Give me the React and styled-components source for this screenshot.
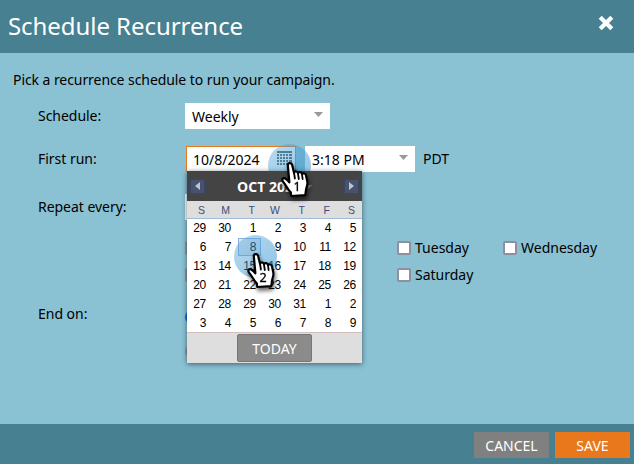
import React from "react";
import styled, { createGlobalStyle, css } from "styled-components";

const GlobalStyle = createGlobalStyle`
  *, *::before, *::after { box-sizing: border-box; }
  body { margin: 0; overflow: hidden; }
  button, input { font-family: inherit; }
`;

const Dialog = styled.div`
  display: flex;
  flex-direction: column;
  width: 634px;
  height: 464px;
  background: #8ac1d3;
  color: #000;
  font: 14px/20px "Noto Sans", sans-serif;
`;

const Header = styled.header`
  display: flex;
  flex: none;
  align-items: center;
  justify-content: space-between;
  height: 53px;
  padding: 0 20px 0 8px;
  background: #468091;
  color: #fff;
`;

const Title = styled.h1`
  margin: -1px 0 0;
  font-size: 24px;
  line-height: 32px;
  font-weight: 400;
  letter-spacing: -0.06px;
`;

const CloseButton = styled.button`
  display: flex;
  width: 16px;
  height: 16px;
  margin-bottom: 7px;
  padding: 0;
  border: 0;
  background: none;
`;

const Body = styled.main`
  flex: 1;
  padding: 17px 0 0 13px;
`;

const Intro = styled.p`
  margin: 0 0 13px;
  letter-spacing: -0.07px;
`;

const FormRow = styled.div`
  display: flex;
  height: ${(p) => p.$height}px;
  padding-left: 25px;
`;

const Label = styled.div`
  flex: none;
  width: 147px;
  padding-top: 3px;
  letter-spacing: -0.03px;
`;

const Control = styled.div`
  position: relative;
  display: flex;
  align-items: center;
  justify-content: space-between;
  flex: none;
  width: ${(p) => p.$width}px;
  height: 26px;
  padding: 1px 7px 0;
  background: #fff;
`;

const DateControl = styled(Control)`
  margin: 0 9px 0 1px;
  padding: 1px 2px 0 6px;
  border: 1px solid #e87a1c;
`;

const Arrow = styled.span`
  width: 9px;
  height: 5px;
  margin-bottom: 4px;
  background: #999;
  clip-path: polygon(0 0, 100% 0, 50% 100%);
`;

const Zone = styled.span`
  padding: 3px 0 0 8px;
`;

const CheckGrid = styled.div`
  display: grid;
  grid-template-columns: repeat(4, 106px);
  grid-auto-rows: 27px;
  margin-left: 172px;
  height: 63px;
`;

const Option = styled.label`
  display: flex;
  align-items: center;
  gap: 4px;
  height: 20px;
`;

const Box = styled.span`
  width: 14px;
  height: 14px;
  border: 2px solid #8f8f9d;
  border-radius: ${(p) => (p.$round ? "50%" : "2px")};
  background: #fff;
  ${(p) => p.$on && css`border-color: #0060df;`}
`;

const Radios = styled.div`
  display: flex;
  flex-direction: column;
  gap: 14px;
  padding-top: 6px;
`;

const Footer = styled.footer`
  display: flex;
  flex: none;
  justify-content: flex-end;
  gap: 6px;
  height: 40px;
  padding: 8px 4px 0 0;
  background: #468091;
`;

const Button = styled.button`
  width: 75px;
  height: 26px;
  padding: 2px 0 0;
  border: 0;
  background: ${(p) => (p.$primary ? "#e8781b" : "#808080")};
  color: #fff;
  font-size: 14px;
  line-height: 24px;
`;

const Calendar = styled.div`
  position: absolute;
  z-index: 2;
  top: 24px;
  left: 0;
  width: 175px;
  height: 192px;
  background: #fff;
  box-shadow: 0 1px 5px rgba(30, 50, 60, 0.7);
  font-family: "Liberation Sans", Arial, sans-serif;
`;

const MonthBar = styled.div`
  display: flex;
  align-items: center;
  justify-content: space-between;
  height: 30px;
  padding: 0 3px;
  background: #444;
  color: #fff;
  font: 700 14px/20px "Open Sans", "Noto Sans", sans-serif;
`;

const MonthButton = styled.button`
  display: flex;
  align-items: center;
  justify-content: center;
  width: 15px;
  height: 15px;
  padding: 0;
  border: 1px solid #384766;
  border-radius: 1px;
  background: #465270;
`;

const MonthName = styled.span`
  display: flex;
  align-items: center;
  gap: 4px;
  padding: 1px 0 0;
`;

const Weekdays = styled.div`
  display: grid;
  grid-template-columns: repeat(7, 25px);
  height: 18px;
  padding-top: 1px;
  border-bottom: 1px solid #a3bad9;
  background: #dedede;
  color: #3a4f7c;
  font-size: 10.5px;
  line-height: 17px;
  text-align: right;
  span { padding-right: 7px; }
`;

const Days = styled.div`
  display: grid;
  grid-template-columns: repeat(7, 25px);
  grid-auto-rows: 19px;
  height: 113px;
`;

const Day = styled.span`
  margin: 0 1px;
  padding-right: 5px;
  font-size: 12px;
  letter-spacing: -0.3px;
  line-height: 19px;
  text-align: right;
  ${(p) => p.$selected && css`
    height: 18px;
    border: 1px solid #8db2e3;
    padding-right: 4px;
    line-height: 17px;
    background: #dfe8f6;
  `}
`;

const CalendarFooter = styled.div`
  display: flex;
  justify-content: center;
  height: 31px;
  padding-top: 1px;
  border-top: 1px solid #d1bfc1;
  background: #dedede;
`;

const TodayButton = styled.button`
  width: 75px;
  height: 28px;
  padding: 1px 0 0;
  border: 1px solid #777;
  border-radius: 2px;
  background: #8b8b8b;
  color: #fff;
  font: 14px/24px "Noto Sans", sans-serif;
`;

const Halo = styled.span`
  position: absolute;
  z-index: ${(p) => p.$z};
  left: ${(p) => p.$x}px;
  top: ${(p) => p.$y}px;
  width: 43px;
  height: 43px;
  border-radius: 50%;
  background: linear-gradient(135deg, rgba(80, 165, 215, 0.4), rgba(50, 145, 205, 0.55));
`;

const Pointer = styled.svg`
  position: absolute;
  z-index: 4;
  left: ${(p) => p.$x}px;
  top: ${(p) => p.$y}px;
  overflow: visible;
  filter: drop-shadow(1px 3px 2px rgba(0, 0, 0, 0.6));
`;

function Hand({ x, y, step }) {
  return (
    <Pointer $x={x} $y={y} width="28" height="35" viewBox="0 0 28 35">
      <path
        d="M6.8 3.1C6.6.7 10.4.3 11.1 2.7L13 10.8C13.5 8.8 16.4 9 16.9 11C17.9 9.4 20.7 10 21 12C22.4 10.8 24.7 11.6 25 13.4L26.4 20C26.8 24 24.6 26.3 24.8 29.6L24.2 33.2L10.2 34L9.8 30.4C6.9 27.8 5.4 23.6 2.7 20.5C.2 17.7 1.5 15.4 4.1 16.4C5.9 17.1 7 19.1 8.4 20.3Z"
        fill="#fff" stroke="#000" strokeWidth="2.2" strokeLinejoin="round"
      />
      <path d="M13 10.5l.9 6M16.9 11l.9 6M21 12l.6 5" fill="none" stroke="#000" strokeWidth="1.8" strokeLinecap="round" />
      <text x="16" y="29" textAnchor="middle" fontFamily="Noto Sans, sans-serif" fontSize="12.5" fill="#000" stroke="#000" strokeWidth="0.3">{step}</text>
    </Pointer>
  );
}

const IconSvg = styled.svg`
  flex: none;
  margin-bottom: 3px;
`;

function CalendarIcon() {
  return (
    <IconSvg width="16" height="15" viewBox="0 0 16 15" fill="#56636d" shapeRendering="crispEdges">
      <rect width="15" height="2" />
      {[3, 6, 9, 12].map((y) =>
        [0, 3, 6, 9, 12].map((x) => <rect key={`${x}-${y}`} x={x} y={y} width={x === 12 ? 3 : 2} height="2" />)
      )}
    </IconSvg>
  );
}

const weekdays = ["S", "M", "T", "W", "T", "F", "S"];
const days = [29, 30, ...Array.from({ length: 31 }, (_, i) => i + 1), 1, 2, 3, 4, 5, 6, 7, 8, 9];
const checks = ["", "", "Tuesday", "Wednesday", "", "", "Saturday"];

function DatePicker() {
  return (
    <Calendar>
      <MonthBar>
        <MonthButton aria-label="Previous month">
          <svg width="5" height="8" viewBox="0 0 5 8"><path d="M5 0v8L0 4z" fill="#c3c3c3" /></svg>
        </MonthButton>
        <MonthName>
          OCT 2024
          <svg width="7" height="4" viewBox="0 0 7 4"><path d="M0 0h7L3.5 4z" fill="#888" /></svg>
        </MonthName>
        <MonthButton aria-label="Next month">
          <svg width="5" height="8" viewBox="0 0 5 8"><path d="M0 0v8l5-4z" fill="#c3c3c3" /></svg>
        </MonthButton>
      </MonthBar>
      <Weekdays>{weekdays.map((d, i) => <span key={i}>{d}</span>)}</Weekdays>
      <Days>{days.map((d, i) => <Day key={i} $selected={i === 9}>{d}</Day>)}</Days>
      <CalendarFooter><TodayButton>TODAY</TodayButton></CalendarFooter>
    </Calendar>
  );
}

export default function App() {
  return (
    <>
      <GlobalStyle />
      <Dialog>
        <Header>
          <Title>Schedule Recurrence</Title>
          <CloseButton aria-label="Close">
            <svg width="16" height="16" viewBox="0 0 16 16">
              <path d="M3.7 3.7l8.6 8.6M12.3 3.7l-8.6 8.6" stroke="#fff" strokeWidth="4.2" strokeLinecap="square" />
            </svg>
          </CloseButton>
        </Header>
        <Body>
          <Intro>Pick a recurrence schedule to run your campaign.</Intro>
          <FormRow $height={43}>
            <Label>Schedule:</Label>
            <Control $width={145}>Weekly<Arrow /></Control>
          </FormRow>
          <FormRow $height={48}>
            <Label>First run:</Label>
            <DateControl $width={110}>
              10/8/2024
              <CalendarIcon />
              <DatePicker />
              <Halo $z={1} $x={81} $y={-3} />
              <Halo $z={3} $x={47} $y={88} />
              <Hand x={94} y={15} step="1" />
              <Hand x={60} y={105.5} step="2" />
            </DateControl>
            <Control $width={110}>3:18 PM<Arrow /></Control>
            <Zone>PDT</Zone>
          </FormRow>
          <FormRow $height={44}>
            <Label>Repeat every:</Label>
            <Control $width={60} />
          </FormRow>
          <CheckGrid>
            {checks.map((c, i) => <Option key={i}><Box />{c}</Option>)}
          </CheckGrid>
          <FormRow $height={80}>
            <Label>End on:</Label>
            <Radios>
              <Option><Box $round $on /></Option>
              <Option><Box $round /></Option>
            </Radios>
          </FormRow>
        </Body>
        <Footer>
          <Button>CANCEL</Button>
          <Button $primary>SAVE</Button>
        </Footer>
      </Dialog>
    </>
  );
}
